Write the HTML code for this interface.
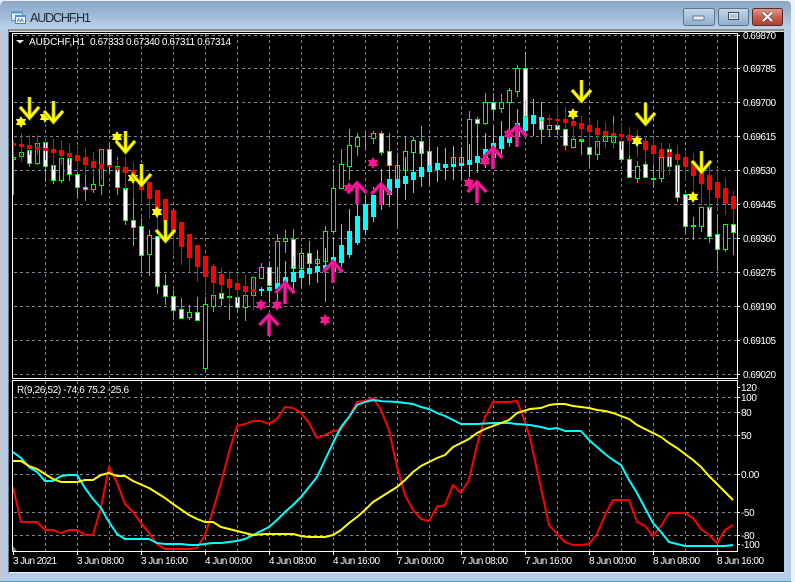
<!DOCTYPE html>
<html><head><meta charset="utf-8"><style>
html,body{margin:0;padding:0;background:#eef1f5;width:795px;height:582px;overflow:hidden}
svg{position:absolute;left:0;top:0;display:block}
text{font-family:"Liberation Sans",sans-serif;font-size:10px;fill:#fff}
.s{letter-spacing:-.4px}
</style></head><body>
<svg width="795" height="582" viewBox="0 0 795 582" xmlns="http://www.w3.org/2000/svg">
<defs>
<linearGradient id="tb" x1="0" y1="0" x2="0" y2="1"><stop offset="0" stop-color="#8ca7c6"/><stop offset=".5" stop-color="#9fb9d6"/><stop offset="1" stop-color="#bcd3ec"/></linearGradient>
<linearGradient id="bb" x1="0" y1="0" x2="0" y2="1"><stop offset="0" stop-color="#c4d6ea"/><stop offset=".5" stop-color="#a9c2dc"/><stop offset="1" stop-color="#8fadcc"/></linearGradient>
<linearGradient id="rb" x1="0" y1="0" x2="0" y2="1"><stop offset="0" stop-color="#e09a8c"/><stop offset=".5" stop-color="#c9604f"/><stop offset="1" stop-color="#b23c2c"/></linearGradient>
<g id="ya"><path d="M0 -21V-1M-9.5 -11L0 0L9.5 -11" fill="none" stroke="#777700" stroke-width="4"/><path d="M0 -21V-1M-9.5 -11L0 0L9.5 -11" fill="none" stroke="#ffff00" stroke-width="2.6"/></g>
<g id="pa"><path d="M0 21V1M-9.5 10L0 0L9.5 10" fill="none" stroke="#8b1a7a" stroke-width="4"/><path d="M0 21V1M-9.5 10L0 0L9.5 10" fill="none" stroke="#ff1493" stroke-width="2.6"/></g>
<g id="ys"><path d="M0 -6L5.2 3H-5.2ZM0 6L-5.2 -3H5.2Z" fill="#ffff00"/><circle r="3.2" fill="#ffff00"/></g>
<g id="ps"><path d="M0 -6L5.2 3H-5.2ZM0 6L-5.2 -3H5.2Z" fill="#ff1493"/><circle r="3.2" fill="#ff1493"/></g>
<clipPath id="c1"><rect x="13" y="34" width="724" height="344"/></clipPath>
<clipPath id="c2"><rect x="13" y="381" width="724" height="170"/></clipPath>
</defs>

<!-- window frame -->
<path d="M0 6Q1 1 6 1H786Q791 1 791 6V581H0Z" fill="#b5cce8"/>
<rect x="0" y="1" width="791" height="28" fill="url(#tb)"/>
<path d="M0 0H6Q1 1 0 6ZM786 1H795V29H791V6Q791 1 786 1Z" fill="#e4eaf1"/>
<rect x="791" y="0" width="4" height="582" fill="#eef1f5"/>
<rect x="0" y="30" width="2" height="552" fill="#c8c8c8"/>
<rect x="0" y="581" width="791" height="1" fill="#3fa8b4"/>
<rect x="9" y="29" width="775" height="2" fill="#8c8c8c"/>
<rect x="9" y="31" width="775" height="1" fill="#d8dce0"/>
<rect x="9" y="32" width="775" height="541" fill="#000"/>
<rect x="9" y="572" width="775" height="1" fill="#e8eef4"/>
<rect x="8" y="29" width="1" height="544" fill="#6f7780"/>

<!-- icon + title -->
<rect x="11.5" y="11.5" width="11" height="9" fill="#dbe8f6" stroke="#5b8ec4"/>
<rect x="11" y="11" width="12" height="2.5" fill="#5b9bd8"/>
<rect x="15.5" y="15.5" width="10" height="8" fill="#f4f8fc" stroke="#4a84c0"/>
<rect x="15" y="15" width="11" height="2" fill="#4a94dc"/>
<path d="M17 22L18.5 19L20.5 21.5L22 19L23.5 22" fill="none" stroke="#4a84c0"/>
<text x="30" y="22" style="font-size:12.5px;fill:#1c2a3a" textLength="61">AUDCHF,H1</text>

<!-- buttons -->
<rect x="683.5" y="8.5" width="31" height="17" rx="2" fill="url(#bb)" stroke="#5f7389"/>
<rect x="693" y="16" width="11" height="4" fill="#e8eef4" stroke="#55606d" stroke-width=".8"/>
<rect x="718.5" y="8.5" width="30" height="17" rx="2" fill="url(#bb)" stroke="#5f7389"/>
<rect x="728.5" y="12.5" width="10" height="7" fill="none" stroke="#3f4852" stroke-width="1"/>
<rect x="729.5" y="13.5" width="8" height="5" fill="none" stroke="#e8eef4" stroke-width="1"/>
<rect x="752.5" y="8.5" width="30" height="17" rx="2" fill="url(#rb)" stroke="#5a2a2a"/>
<path d="M763 12.5L772 21M772 12.5L763 21" stroke="#4a3a3a" stroke-width="3.6"/>
<path d="M763 12.5L772 21M772 12.5L763 21" stroke="#f2f2f2" stroke-width="2.4"/>

<!-- grid -->
<g shape-rendering="crispEdges" stroke="#778899" stroke-width="1" stroke-dasharray="3 3" fill="none">
<path d="M14 35.5H737M14 68.5H737M14 102.5H737M14 136.5H737M14 170.5H737M14 204.5H737M14 238.5H737M14 272.5H737M14 306.5H737M14 340.5H737M14 374.5H737"/>
<path d="M45.5 34V378M77.5 34V378M109.5 34V378M141.5 34V378M173.5 34V378M205.5 34V378M237.5 34V378M269.5 34V378M301.5 34V378M333.5 34V378M365.5 34V378M397.5 34V378M429.5 34V378M461.5 34V378M493.5 34V378M525.5 34V378M557.5 34V378M589.5 34V378M621.5 34V378M653.5 34V378M685.5 34V378M717.5 34V378"/>
<path d="M14 397.5H737M14 412.5H737M14 435.5H737M14 474.5H737M14 512.5H737M14 535.5H737"/>
<path d="M45.5 381V551M77.5 381V551M109.5 381V551M141.5 381V551M173.5 381V551M205.5 381V551M237.5 381V551M269.5 381V551M301.5 381V551M333.5 381V551M365.5 381V551M397.5 381V551M429.5 381V551M461.5 381V551M493.5 381V551M525.5 381V551M557.5 381V551M589.5 381V551M621.5 381V551M653.5 381V551M685.5 381V551M717.5 381V551"/>
</g>

<g clip-path="url(#c1)" shape-rendering="crispEdges">
<!-- green wicks -->
<path fill="none" stroke="#00ff00" d="M13.5 150V195M21.5 145V162M29.5 135V167M37.5 135V165M45.5 135V182M53.5 139V184M61.5 140V183M69.5 143V181M77.5 146V197M85.5 148V201M93.5 152V193M101.5 149V195M109.5 145V173M117.5 157V195M125.5 170V225M133.5 198V246M141.5 218V273M149.5 230V276M157.5 236V294M165.5 274V305M173.5 290V320M181.5 298V319M189.5 305V320M197.5 297V320M205.5 297V372M213.5 295V312M221.5 290V306M229.5 296V320M237.5 297V312M245.5 295V321M253.5 277V295M261.5 263V278M269.5 261V290M277.5 234V283M285.5 230V253M293.5 229V268M301.5 248V268M309.5 241V263M317.5 250V263M325.5 226V302M333.5 165V233M341.5 149V188M349.5 129V180M357.5 133V156M365.5 133V150M373.5 131V144M381.5 131V155M389.5 133V207M397.5 153V226M405.5 137V190M413.5 137V155M421.5 126V165M429.5 139V172M453.5 146V168M461.5 150V166M469.5 111V165M477.5 117V165M485.5 93V125M493.5 93V120M501.5 94V113M509.5 88V130M517.5 65V97M525.5 52V118M541.5 117V144M549.5 120V137M557.5 120V135M565.5 125V150M573.5 135V148M581.5 139V155M589.5 147V168M597.5 141V160M605.5 136V148M613.5 116V148M621.5 141V163M629.5 155V178M637.5 161V183M645.5 162V178M653.5 165V188M661.5 157V182M669.5 149V173M677.5 165V202M685.5 194V233M693.5 217V240M701.5 207V232M709.5 207V243M717.5 214V271M725.5 224V252M733.5 224V255"/>
<!-- outlined (black) bodies -->
<path fill="#000" stroke="#00ff00" d="M13.5 157.5h2v2h-2zM19.5 152.5h4v4h-4zM35.5 143.5h4v20h-4zM59.5 158.5h4v22h-4zM91.5 184.5h4v5h-4zM99.5 149.5h4v36h-4zM147.5 235.5h4v19h-4zM187.5 312.5h4v5h-4zM203.5 304.5h4v64h-4zM211.5 295.5h4v11h-4zM243.5 295.5h4v12h-4zM251.5 277.5h4v18h-4zM259.5 267.5h4v11h-4zM275.5 241.5h4v42h-4zM283.5 238.5h4v3h-4zM299.5 253.5h4v15h-4zM315.5 259.5h4v4h-4zM323.5 231.5h4v30h-4zM331.5 188.5h4v43h-4zM339.5 164.5h4v24h-4zM347.5 145.5h4v21h-4zM355.5 137.5h4v9h-4zM371.5 133.5h4v5h-4zM395.5 165.5h4v14h-4zM403.5 151.5h4v19h-4zM411.5 140.5h4v12h-4zM451.5 157.5h4v9h-4zM459.5 157.5h4v6h-4zM467.5 119.5h4v41h-4zM483.5 102.5h4v21h-4zM499.5 102.5h4v6h-4zM507.5 90.5h4v12h-4zM515.5 68.5h4v23h-4zM547.5 125.5h4v4h-4zM571.5 139.5h4v8h-4zM595.5 141.5h4v13h-4zM603.5 136.5h4v5h-4zM611.5 136.5h4v6h-4zM635.5 166.5h4v12h-4zM659.5 157.5h4v21h-4zM699.5 207.5h4v19h-4zM723.5 224.5h4v25h-4z"/>
<!-- white bodies -->
<path fill="#fff" stroke="#00ff00" d="M27.5 150.5h4v13h-4zM43.5 142.5h4v24h-4zM51.5 165.5h4v15h-4zM67.5 158.5h4v16h-4zM75.5 174.5h4v13h-4zM83.5 187.5h4v2h-4zM107.5 149.5h4v16h-4zM115.5 166.5h4v21h-4zM123.5 188.5h4v32h-4zM131.5 220.5h4v7h-4zM139.5 226.5h4v29h-4zM155.5 236.5h4v50h-4zM163.5 285.5h4v11h-4zM171.5 296.5h4v14h-4zM179.5 309.5h4v9h-4zM195.5 312.5h4v8h-4zM219.5 293.5h4v5h-4zM235.5 297.5h4v10h-4zM267.5 267.5h4v18h-4zM291.5 239.5h4v29h-4zM307.5 253.5h4v10h-4zM379.5 133.5h4v19h-4zM387.5 151.5h4v14h-4zM419.5 141.5h4v12h-4zM427.5 151.5h4v15h-4zM475.5 119.5h4v4h-4zM491.5 102.5h4v7h-4zM523.5 68.5h4v48h-4zM539.5 120.5h4v9h-4zM555.5 125.5h4v4h-4zM563.5 129.5h4v16h-4zM587.5 147.5h4v7h-4zM619.5 141.5h4v18h-4zM627.5 159.5h4v18h-4zM643.5 164.5h4v13h-4zM667.5 149.5h4v17h-4zM675.5 165.5h4v32h-4zM683.5 194.5h4v32h-4zM707.5 207.5h4v29h-4zM715.5 234.5h4v15h-4zM731.5 224.5h4v8h-4z"/>
<path fill="#00ff00" d="M227 296h5v2h-5zM579 139h5v3h-5zM651 178h5v2h-5zM691 225h5v2h-5z"/>
<!-- red wicks -->
<path fill="none" stroke="#ff0000" d="M13.5 140V155M21.5 133V162M29.5 135V155M37.5 135V155M45.5 135V160M53.5 139V170M61.5 140V165M69.5 143V165M77.5 146V172M85.5 148V175M93.5 152V178M101.5 148V180M109.5 165V170M117.5 160V172M125.5 157V190M133.5 162V198M141.5 165V205M149.5 182V219M157.5 190V230M165.5 199V236M173.5 210V255M181.5 222V265M189.5 234V273M197.5 245V282M205.5 256V294M213.5 264V300M221.5 268V297M229.5 271V304M237.5 273V303M245.5 275V303M253.5 276V310M549.5 115V125M557.5 105V127M565.5 107V129M573.5 112V138M581.5 116V140M589.5 117V147M597.5 120V148M605.5 122V148M613.5 124V147M621.5 123V150M629.5 127V155M637.5 130V157M645.5 136V162M653.5 140V165M661.5 143V172M669.5 143V175M677.5 145V192M685.5 150V180M693.5 153V190M701.5 155V205M709.5 162V210M717.5 168V210M725.5 178V215M733.5 191V224"/>
<!-- cyan wicks -->
<path fill="none" stroke="#00ffff" d="M109.5 167V173M261.5 287V296M269.5 287V303M277.5 267V300M285.5 261V295M293.5 256V290M301.5 255V287M309.5 250V285M317.5 250V283M325.5 248V270M333.5 237V272M341.5 224V267M349.5 209V258M357.5 205V245M365.5 195V235M373.5 187V222M381.5 169V210M389.5 169V205M397.5 160V196M405.5 157V200M413.5 152V193M421.5 148V187M429.5 147V185M437.5 147V182M445.5 148V180M453.5 146V180M461.5 147V180M469.5 144V177M477.5 133V173M485.5 133V168M493.5 127V168M501.5 121V155M509.5 116V147M517.5 109V140M525.5 100V135M533.5 99V136M541.5 102V136"/>
<!-- red bodies -->
<path fill="#ff0000" d="M13 143h3v3h-3zM19 144h5v3h-5zM27 145h5v4h-5zM35 147h5v3h-5zM43 148h5v3h-5zM51 149h5v4h-5zM59 150h5v6h-5zM67 153h5v4h-5zM75 155h5v6h-5zM83 157h5v8h-5zM91 161h5v7h-5zM99 164h5v5h-5zM107 165h5v2h-5zM115 167h5v3h-5zM123 167h5v6h-5zM131 170h5v10h-5zM139 177h5v13h-5zM147 182h5v17h-5zM155 190h5v20h-5zM163 199h5v22h-5zM171 210h5v23h-5zM179 222h5v25h-5zM187 234h5v24h-5zM195 245h5v22h-5zM203 256h5v21h-5zM211 266h5v17h-5zM219 274h5v11h-5zM227 279h5v9h-5zM235 283h5v7h-5zM243 286h5v6h-5zM251 289h5v3h-5zM547 118h5v2h-5zM555 119h5v2h-5zM563 119h5v4h-5zM571 121h5v5h-5zM579 123h5v6h-5zM587 125h5v7h-5zM595 128h5v7h-5zM603 131h5v5h-5zM611 133h5v3h-5zM619 134h5v3h-5zM627 135h5v6h-5zM635 137h5v7h-5zM643 141h5v9h-5zM651 145h5v9h-5zM659 149h5v8h-5zM667 152h5v5h-5zM675 154h5v6h-5zM683 157h5v10h-5zM691 161h5v15h-5zM699 172h5v12h-5zM707 175h5v15h-5zM715 182h5v16h-5zM723 188h5v16h-5zM731 196h5v13h-5z"/>
<!-- cyan bodies -->
<path fill="#00ffff" d="M259 289h5v2h-5zM267 287h5v4h-5zM275 283h5v6h-5zM283 277h5v7h-5zM291 272h5v10h-5zM299 270h5v8h-5zM307 268h5v6h-5zM315 266h5v6h-5zM323 265h5v4h-5zM331 257h5v15h-5zM339 245h5v18h-5zM347 231h5v24h-5zM355 216h5v27h-5zM363 204h5v26h-5zM371 195h5v22h-5zM379 184h5v21h-5zM387 179h5v16h-5zM395 179h5v9h-5zM403 176h5v8h-5zM411 172h5v8h-5zM419 167h5v10h-5zM427 165h5v7h-5zM435 163h5v7h-5zM443 164h5v4h-5zM451 164h5v3h-5zM459 163h5v3h-5zM467 160h5v5h-5zM475 156h5v7h-5zM483 149h5v10h-5zM491 143h5v15h-5zM499 136h5v13h-5zM507 130h5v13h-5zM515 123h5v14h-5zM523 117h5v14h-5zM531 115h5v9h-5zM539 117h5v3h-5z"/>
</g>

<!-- arrows/stars -->
<g clip-path="url(#c1)">
<use href="#ys" x="21" y="122"/><use href="#ys" x="45" y="117"/><use href="#ys" x="117" y="137"/><use href="#ys" x="133" y="178"/><use href="#ys" x="157" y="212"/><use href="#ys" x="573" y="114"/><use href="#ys" x="637" y="141"/><use href="#ys" x="693" y="197"/>
<use href="#ya" x="29.5" y="118"/><use href="#ya" x="53.5" y="122"/><use href="#ya" x="125.5" y="152"/><use href="#ya" x="141.5" y="185"/><use href="#ya" x="165.5" y="241"/><use href="#ya" x="581.5" y="101"/><use href="#ya" x="645.5" y="124"/><use href="#ya" x="701.5" y="172"/>
<use href="#ps" x="261" y="305"/><use href="#ps" x="277" y="305"/><use href="#ps" x="325" y="320"/><use href="#ps" x="373" y="163"/><use href="#ps" x="349" y="188"/><use href="#ps" x="469" y="183"/><use href="#ps" x="485" y="161"/><use href="#ps" x="509" y="134"/>
<use href="#pa" x="269" y="315"/><use href="#pa" x="285" y="283"/><use href="#pa" x="333" y="262"/><use href="#pa" x="357" y="183"/><use href="#pa" x="381" y="184"/><use href="#pa" x="477" y="182"/><use href="#pa" x="493" y="148"/><use href="#pa" x="517" y="126"/>
</g>

<!-- indicator lines -->
<g clip-path="url(#c2)" fill="none" stroke-width="2" stroke-linejoin="round">
<polyline stroke="#ff0000" points="13,487 21,522 37,522 45,530 53,530 61,533 69,530 77,530 85,535 93,535 101,507 109,467 117,483 125,504 133,512 141,523 149,533 157,544 165,549 173,549 181,549 189,549 197,548 205,535 213,510 221,483 229,452 237,426 245,424 253,421 261,421 269,424 277,419 285,407 293,408 301,413 309,423 317,438 325,435 333,431 341,430 349,417 357,402 365,401 373,398 381,410 389,430 397,467 405,495 413,510 421,519 429,521 437,507 445,505 453,485 461,493 469,480 477,445 485,417 493,402 501,402 509,402 517,401 525,422 530,438 541,488 549,525 557,534 565,542 573,545 581,545 589,544 597,534 605,515 613,500 621,500 629,500 637,522 645,526 653,536 661,526 669,513 677,513 685,513 693,518 701,529 709,535 717,543 725,530 733,525"/>
<polyline stroke="#00ffff" points="13,452 21,458 29,467 37,472 45,481 53,481 61,476 69,475 77,475 85,488 93,499 101,508 109,522 117,534 125,539 133,539 141,539 149,539 157,543 165,544 173,544 181,544 189,545 197,545 205,544 213,543 221,543 229,542 237,541 245,539 253,535 261,531 269,527 277,520 285,512 293,505 301,497 309,487 317,477 325,460 333,443 341,427 349,417 357,405 365,402 373,400 381,401 397,402 413,404 421,407 429,409 437,413 445,416 453,420 461,424 477,424 493,423 509,423 517,424 530,425 541,427 549,429 557,428 565,431 581,431 589,440 597,447 605,454 613,460 621,465 629,480 637,493 645,508 653,523 661,532 669,542 677,544 685,546 725,546 733,545"/>
<polyline stroke="#ffff00" points="13,461 21,461 29,466 37,469 45,474 53,479 61,482 77,482 85,480 93,480 101,475 109,473 117,476 125,476 133,481 149,488 165,498 173,504 189,515 197,519 205,522 213,522 221,527 237,531 253,535 265,534 293,534 301,536 309,537 325,537 333,535 341,530 349,523 357,517 365,510 373,502 381,497 389,492 397,487 405,480 413,472 421,466 429,462 437,458 445,455 453,447 461,443 469,439 477,433 485,429 493,426 501,423 509,420 517,413 530,409 541,408 549,405 557,404 565,404 573,406 589,408 597,410 605,411 613,413 621,416 629,419 637,425 645,429 653,433 661,437 669,443 677,448 685,454 693,460 701,467 709,476 717,484 725,492 733,500"/>
</g>

<path d="M13 546L17 551H13Z" fill="#778899"/>

<!-- frames -->
<g shape-rendering="crispEdges" fill="none" stroke="#fff">
<path d="M12.5 378.5V33.5H737.5V378.5H12.5M12.5 551.5V380.5H737.5V551.5H12.5"/>
<path d="M737 35.5h3M737 68.5h3M737 102.5h3M737 136.5h3M737 170.5h3M737 204.5h3M737 238.5h3M737 272.5h3M737 306.5h3M737 340.5h3M737 374.5h3"/>
<path d="M737 387.5h3M737 397.5h3M737 412.5h3M737 435.5h3M737 474.5h3M737 512.5h3M737 535.5h3M737 544.5h3"/>
<path d="M13.5 551v4M77.5 551v4M141.5 551v4M205.5 551v4M269.5 551v4M333.5 551v4M397.5 551v4M461.5 551v4M525.5 551v4M589.5 551v4M653.5 551v4M717.5 551v4"/>
</g>

<!-- labels -->
<path d="M16 40h8l-4 3.5z" fill="#fff"/>
<text x="29" y="45" textLength="56">AUDCHF,H1</text>
<text x="90" y="45" textLength="141">0.67333 0.67340 0.67311 0.67314</text>
<text x="17" y="393" textLength="112">R(9,26,52) -74.6 75.2 -25.6</text>
<g>
<text x="743" y="39" textLength="33">0.69870</text>
<text x="743" y="72" textLength="33">0.69785</text>
<text x="743" y="106" textLength="33">0.69700</text>
<text x="743" y="140" textLength="33">0.69615</text>
<text x="743" y="174" textLength="33">0.69530</text>
<text x="743" y="208" textLength="33">0.69445</text>
<text x="743" y="242" textLength="33">0.69360</text>
<text x="743" y="276" textLength="33">0.69275</text>
<text x="743" y="310" textLength="33">0.69190</text>
<text x="743" y="344" textLength="33">0.69105</text>
<text x="743" y="378" textLength="33">0.69020</text>
<text class="s" x="741" y="391">120</text>
<text class="s" x="741" y="401">100</text>
<text class="s" x="741" y="416">80</text>
<text class="s" x="741" y="439">50</text>
<text class="s" x="741" y="478">0.00</text>
<text class="s" x="741" y="516">-50</text>
<text class="s" x="741" y="539">-80</text>
<text class="s" x="741" y="548">-100</text>
<text x="13" y="564" textLength="44">3 Jun 2021</text>
<text x="77" y="564" textLength="47">3 Jun 08:00</text>
<text x="141" y="564" textLength="47">3 Jun 16:00</text>
<text x="205" y="564" textLength="47">4 Jun 00:00</text>
<text x="269" y="564" textLength="47">4 Jun 08:00</text>
<text x="333" y="564" textLength="47">4 Jun 16:00</text>
<text x="397" y="564" textLength="47">7 Jun 00:00</text>
<text x="461" y="564" textLength="47">7 Jun 08:00</text>
<text x="525" y="564" textLength="47">7 Jun 16:00</text>
<text x="589" y="564" textLength="47">8 Jun 00:00</text>
<text x="653" y="564" textLength="47">8 Jun 08:00</text>
<text x="717" y="564" textLength="47">8 Jun 16:00</text>
</g>
</svg>
</body></html>
